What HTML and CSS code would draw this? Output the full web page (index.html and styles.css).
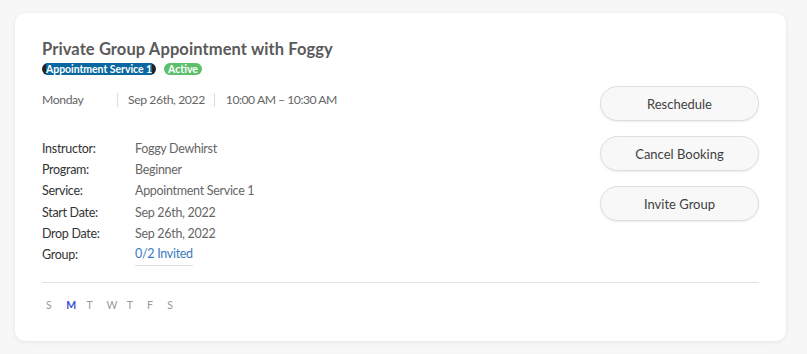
FILE: index.html
```html
<!DOCTYPE html>
<html>
<head>
<meta charset="utf-8">
<link rel="stylesheet" href="styles.css">
</head>
<body>
<div class="card">
  <div class="top">
    <div class="info">
      <div class="title">Private Group Appointment with Foggy</div>
      <div class="badges">
        <span class="badge-service"><span class="badge-service-inner">Appointment Service 1</span></span>
        <span class="badge-active">Active</span>
      </div>
      <div class="when">
        <span class="when-day">Monday</span>
        <span class="sep"></span>
        <span class="when-date">Sep 26th, 2022</span>
        <span class="sep"></span>
        <span class="when-time">10:00 AM – 10:30 AM</span>
      </div>
      <div class="details">
        <div class="row"><span class="label">Instructor:</span><span class="value">Foggy Dewhirst</span></div>
        <div class="row"><span class="label">Program:</span><span class="value">Beginner</span></div>
        <div class="row"><span class="label">Service:</span><span class="value">Appointment Service 1</span></div>
        <div class="row"><span class="label">Start Date:</span><span class="value">Sep 26th, 2022</span></div>
        <div class="row"><span class="label">Drop Date:</span><span class="value">Sep 26th, 2022</span></div>
        <div class="row"><span class="label">Group:</span><span class="value link">0/2 Invited</span></div>
      </div>
    </div>
    <div class="actions">
      <button class="btn">Reschedule</button>
      <button class="btn">Cancel Booking</button>
      <button class="btn">Invite Group</button>
    </div>
  </div>
  <div class="divider"></div>
  <div class="days">
    <span class="day">S</span>
    <span class="day active">M</span>
    <span class="day">T</span>
    <span class="day">W</span>
    <span class="day">T</span>
    <span class="day">F</span>
    <span class="day">S</span>
  </div>
</div>
</body>
</html>
```
FILE: styles.css
```css
* { box-sizing: border-box; }
html, body { margin: 0; padding: 0; }
body {
  background: #f7f7f7;
  font-family: Lato, "Open Sans", sans-serif;
  width: 807px;
  height: 354px;
  overflow: hidden;
}
.card {
  margin: 13px 0 0 15px;
  width: 771px;
  height: 328px;
  background: #fff;
  border-radius: 10px;
  box-shadow: 0 1px 4px rgba(0,0,0,0.08);
  padding: 27px 27px 0 27px;
}
.top {
  display: flex;
  justify-content: space-between;
}
.title {
  font-size: 16.5px;
  line-height: 18px;
  font-weight: 700;
  color: #5a5a5a;
  letter-spacing: 0.1px;
}
.badges {
  margin-top: 5px;
  display: flex;
  gap: 8px;
  height: 12px;
}
.badge-service {
  display: inline-flex;
  background: #222;
  border-radius: 6px;
  padding: 0 4px;
  height: 12px;
}
.badge-service-inner {
  background: #0a67a0;
  color: #fff;
  font-size: 10.5px;
  font-weight: 700;
  line-height: 12px;
  letter-spacing: -0.05px;
}
.badge-active {
  background: #5cbf6b;
  color: #fff;
  font-size: 10.5px;
  font-weight: 700;
  line-height: 12px;
  height: 12px;
  border-radius: 6px;
  padding: 0 4px;
  letter-spacing: 0;
}
.when {
  margin-top: 16px;
  display: flex;
  align-items: center;
  font-size: 12.2px;
  letter-spacing: -0.4px;
  line-height: 18px;
  color: #666;
}
.when-day { width: 75px; }
.sep {
  width: 1px;
  height: 14px;
  background: #ddd;
}
.when-date { margin: 0 9px 0 10px; }
.when-time { margin-left: 11px; letter-spacing: -0.5px; }
.details {
  margin-top: 29px;
  font-size: 12.5px;
  letter-spacing: -0.3px;
}
.row {
  display: flex;
  line-height: 21.2px;
}
.label {
  width: 93px;
  color: #333;
}
.value {
  color: #666;
}
.link {
  color: #3a7cc0;
  border-bottom: 1px solid #ddd;
  line-height: 18px;
  margin-top: 1px;
  height: 21px;
}
.actions {
  margin-top: 46px;
  display: flex;
  flex-direction: column;
  gap: 15px;
  width: 159px;
}
.btn {
  width: 159px;
  height: 35px;
  border: 1px solid #dedede;
  background: #f8f8f8;
  border-radius: 18px;
  box-shadow: 0 1px 2px rgba(0,0,0,0.08);
  font-family: Lato, sans-serif;
  font-size: 13px;
  font-weight: 400;
  color: #3f3f3f;
  padding: 0;
}
.divider {
  margin-top: 16px;
  height: 1px;
  background: #e2e2e2;
}
.days {
  margin-top: 15px;
  display: flex;
  padding-left: 4px;
  font-size: 10.5px;
  line-height: 14px;
  color: #999;
}
.day {
  width: 20.2px;
}
.day.active {
  color: #3b4fd0;
  font-weight: 700;
}
```
